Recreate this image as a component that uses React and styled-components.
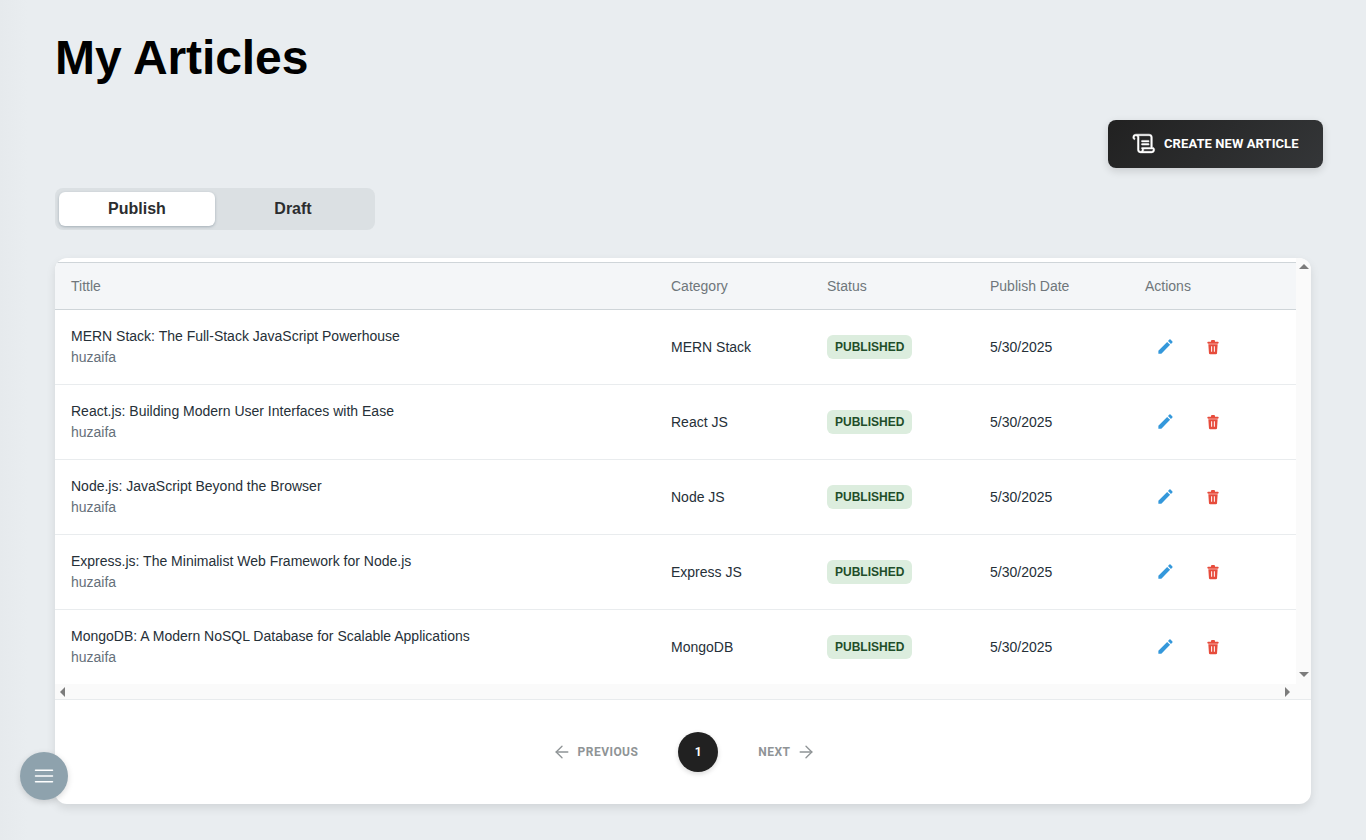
import React from 'react'
import styled, { createGlobalStyle } from 'styled-components'
import { MdEdit } from 'react-icons/md'
import { PiScroll } from 'react-icons/pi'
import { ArrowLeft, ArrowRight } from 'lucide-react'

const GlobalStyle = createGlobalStyle`
    * { box-sizing: border-box; }
    html, body { margin: 0; padding: 0; }
    body {
        min-height: 840px;
        background: linear-gradient(90deg, #e6eaed 0, #e9edf0 28px);
        font-family: "Liberation Sans", Arial, sans-serif;
        color: #212529;
    }
`

const Page = styled.main`
    padding: 25px 55px 36px;
`

const Heading = styled.h1`
    margin: 0;
    height: 66px;
    font-size: 48px;
    line-height: 66px;
    font-weight: 700;
    letter-spacing: -0.1px;
    color: #000;
`

const Toolbar = styled.div`
    display: flex;
    justify-content: flex-end;
    margin: 29px -12px 20px 0;
`

const CreateButton = styled.button`
    display: flex;
    align-items: center;
    gap: 7px;
    width: 215px;
    height: 48px;
    padding: 0 24px 1px;
    border: 0;
    border-radius: 8px;
    background: linear-gradient(135deg, #212121, #343638);
    box-shadow: 0 3px 8px rgba(0, 0, 0, 0.14);
    color: #fff;
    font-family: Roboto, sans-serif;
    font-size: 13px;
    font-weight: 700;
    letter-spacing: 0.08px;
    white-space: nowrap;
`

const Tabs = styled.div`
    display: flex;
    width: 320px;
    height: 42px;
    padding: 4px;
    border-radius: 8px;
    background: #dbe0e3;
`

const Tab = styled.div`
    flex: 1;
    display: flex;
    align-items: center;
    justify-content: center;
    border-radius: 6px;
    font-size: 16px;
    font-weight: 700;
    color: #2b2d2f;
    background: ${p => (p.$active ? '#fff' : 'transparent')};
    box-shadow: ${p => (p.$active ? '0 1px 3px rgba(80, 100, 115, 0.4)' : 'none')};
`

const Card = styled.section`
    margin-top: 28px;
    height: 546px;
    border-radius: 12px;
    background: #fff;
    box-shadow: 0 4px 10px rgba(0, 0, 0, 0.1);
    overflow: hidden;
`

const ScrollArea = styled.div`
    display: flex;
    height: 426px;
`

const TableWrap = styled.div`
    flex: 1;
    padding-top: 4px;
`

const Table = styled.table`
    width: 1241px;
    table-layout: fixed;
    border-collapse: collapse;
`

const HeadCell = styled.th`
    height: 47px;
    padding: 0 16px;
    background: #f4f6f8;
    border-top: 1px solid #cfd5d9;
    border-bottom: 1px solid #cfd5d9;
    text-align: left;
    font-size: 14px;
    font-weight: 400;
    color: #6f767b;
`

const Cell = styled.td`
    height: 75px;
    padding: 0 16px;
    font-size: 14px;
    color: #263038;
    border-bottom: ${p => (p.$last ? '0' : '1px solid #e9ecee')};
`

const ArticleCell = styled(Cell)`
    padding-bottom: 2px;
`

const ArticleTitle = styled.div`
    line-height: 20px;
`

const Author = styled.div`
    margin-top: 1px;
    line-height: 20px;
    color: #66707a;
`

const Badge = styled.span`
    display: inline-block;
    height: 24px;
    padding: 0 8px;
    border-radius: 6px;
    background: #dcedde;
    color: #1f4d2a;
    font-size: 12px;
    line-height: 24px;
    font-weight: 700;
`

const Actions = styled.div`
    display: flex;
    align-items: center;
    gap: 28px;
    padding-left: 10px;
`

const IconButton = styled.span`
    display: flex;
    align-items: center;
    justify-content: center;
    width: 20px;
    height: 20px;
    color: ${p => p.$color};
`

const EditIcon = styled(MdEdit)`
    margin-top: -1px;
`

const VerticalRail = styled.div`
    width: 15px;
    display: flex;
    flex-direction: column;
    justify-content: space-between;
    align-items: center;
    padding: 6px 0 7px;
    background: #fafafa;
`

const HorizontalRail = styled.div`
    height: 16px;
    display: flex;
    justify-content: space-between;
    align-items: center;
    padding: 0 21px 0 5px;
    background: #fafafa;
    border-bottom: 1px solid #e8ebed;
`

const Arrow = styled.span`
    width: 0;
    height: 0;
    border-style: solid;
    border-color: transparent;
    border-width: 5px;
    ${p => p.$dir === 'up' && 'border-top-width: 0; border-bottom-color: #7c7c7c;'}
    ${p => p.$dir === 'down' && 'border-bottom-width: 0; border-top-color: #7c7c7c;'}
    ${p => p.$dir === 'left' && 'border-left-width: 0; border-right-color: #7c7c7c;'}
    ${p => p.$dir === 'right' && 'border-right-width: 0; border-left-color: #7c7c7c;'}
`

const Pagination = styled.nav`
    display: flex;
    align-items: center;
    justify-content: center;
    gap: 40px;
    height: 104px;
    padding-left: 2px;
`

const PageLink = styled.span`
    display: flex;
    align-items: center;
    gap: 6px;
    font-family: Roboto, sans-serif;
    font-size: 12px;
    font-weight: 700;
    letter-spacing: 0.45px;
    color: #8f9496;
`

const PageNumber = styled.span`
    display: flex;
    align-items: center;
    justify-content: center;
    width: 40px;
    height: 40px;
    border-radius: 50%;
    background: #212121;
    box-shadow: 0 2px 5px rgba(0, 0, 0, 0.15);
    color: #fff;
    font-family: Roboto, sans-serif;
    font-size: 12px;
    font-weight: 700;
`

const MenuButton = styled.button`
    position: fixed;
    left: 20px;
    bottom: 40px;
    display: flex;
    align-items: center;
    justify-content: center;
    width: 48px;
    height: 48px;
    padding: 0;
    border: 0;
    border-radius: 50%;
    background: #8ea2ad;
    box-shadow: 0 2px 6px rgba(0, 0, 0, 0.15);
    color: #fff;
`

const TrashIcon = () => (
    <svg width="16" height="16" viewBox="0 0 24 24" fill="currentColor">
        <path d="M9 4V3a1.5 1.5 0 0 1 1.5-1.5h3A1.5 1.5 0 0 1 15 3v1h4.3a1.2 1.2 0 0 1 1.2 1.2v.6A1.2 1.2 0 0 1 19.3 7H4.700a1.2 1.2 0 0 1-1.200-1.200v-.6A1.200 1.200 0 0 1 4.700 4z" />
        <path
            fillRule="evenodd"
            d="M5 8h14l-.9 13a2 2 0 0 1-2 2H7.900a2 2 0 0 1-2-2zM9.200 11v8h1.500v-8zM13.300 11v8h1.500v-8z"
        />
    </svg>
)

const MenuIcon = () => (
    <svg width="24" height="24" viewBox="0 0 24 24" fill="none" stroke="currentColor" strokeWidth="1.5" strokeLinecap="round">
        <path d="M3.500 6.300h17M3.500 12h17M3.500 17.700h17" />
    </svg>
)

const articles = [
    { title: 'MERN Stack: The Full-Stack JavaScript Powerhouse', category: 'MERN Stack' },
    { title: 'React.js: Building Modern User Interfaces with Ease', category: 'React JS' },
    { title: 'Node.js: JavaScript Beyond the Browser', category: 'Node JS' },
    { title: 'Express.js: The Minimalist Web Framework for Node.js', category: 'Express JS' },
    { title: 'MongoDB: A Modern NoSQL Database for Scalable Applications', category: 'MongoDB' },
]

const App = () => {
    return (
        <>
            <GlobalStyle />
            <Page>
                <Heading>My Articles</Heading>
                <Toolbar>
                    <CreateButton>
                        <PiScroll size={25} stroke="currentColor" strokeWidth={5} />
                        CREATE NEW ARTICLE
                    </CreateButton>
                </Toolbar>
                <Tabs>
                    <Tab $active>Publish</Tab>
                    <Tab>Draft</Tab>
                </Tabs>
                <Card>
                    <ScrollArea>
                        <TableWrap>
                            <Table>
                                <colgroup>
                                    <col width="600" />
                                    <col width="156" />
                                    <col width="163" />
                                    <col width="155" />
                                    <col width="167" />
                                </colgroup>
                                <thead>
                                    <tr>
                                        <HeadCell>Tittle</HeadCell>
                                        <HeadCell>Category</HeadCell>
                                        <HeadCell>Status</HeadCell>
                                        <HeadCell>Publish Date</HeadCell>
                                        <HeadCell>Actions</HeadCell>
                                    </tr>
                                </thead>
                                <tbody>
                                    {articles.map((item, i) => {
                                        const last = i === articles.length - 1
                                        return (
                                            <tr key={item.title}>
                                                <ArticleCell $last={last}>
                                                    <ArticleTitle>{item.title}</ArticleTitle>
                                                    <Author>huzaifa</Author>
                                                </ArticleCell>
                                                <Cell $last={last}>{item.category}</Cell>
                                                <Cell $last={last}><Badge>PUBLISHED</Badge></Cell>
                                                <Cell $last={last}>5/30/2025</Cell>
                                                <Cell $last={last}>
                                                    <Actions>
                                                        <IconButton $color="#3498db"><EditIcon size={19} /></IconButton>
                                                        <IconButton $color="#e74c3c"><TrashIcon /></IconButton>
                                                    </Actions>
                                                </Cell>
                                            </tr>
                                        )
                                    })}
                                </tbody>
                            </Table>
                        </TableWrap>
                        <VerticalRail>
                            <Arrow $dir="up" />
                            <Arrow $dir="down" />
                        </VerticalRail>
                    </ScrollArea>
                    <HorizontalRail>
                        <Arrow $dir="left" />
                        <Arrow $dir="right" />
                    </HorizontalRail>
                    <Pagination>
                        <PageLink><ArrowLeft size={20} strokeWidth={1.6} />PREVIOUS</PageLink>
                        <PageNumber>1</PageNumber>
                        <PageLink>NEXT<ArrowRight size={20} strokeWidth={1.6} /></PageLink>
                    </Pagination>
                </Card>
            </Page>
            <MenuButton><MenuIcon /></MenuButton>
        </>
    )
}

export default App
